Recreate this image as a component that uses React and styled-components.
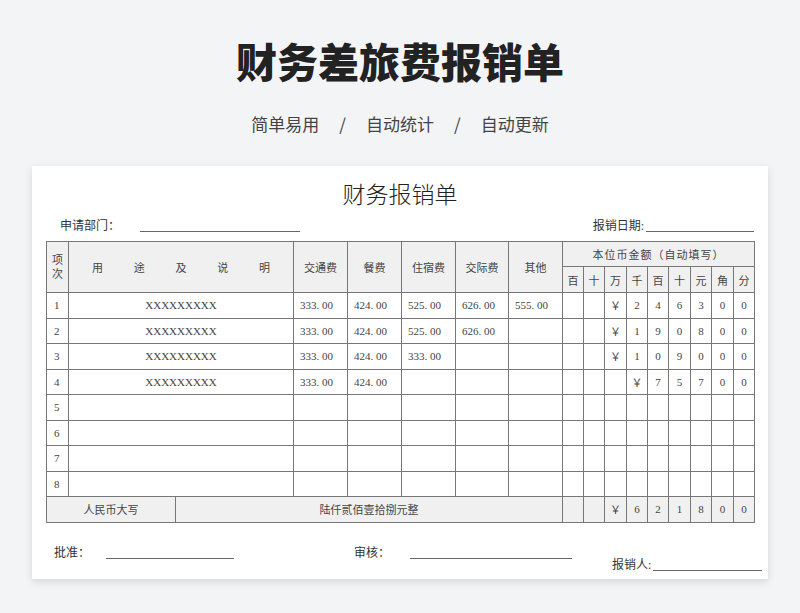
import React from "react";
import styled, { createGlobalStyle } from "styled-components";

const Global = createGlobalStyle`
  html, body { margin: 0; padding: 0; background: #f3f4f6; }
  body { font-family: "Noto Sans CJK SC", "Noto Sans", sans-serif; }
`;

const Page = styled.div`
  width: 800px; height: 613px; display: flex; flex-direction: column; align-items: center;
`;
const Title = styled.h1`
  margin: 34px 0 0; font-size: 41px; line-height: 52px; font-weight: 900; color: #222; letter-spacing: 0;
`;
const Sub = styled.div`
  margin-top: 26px; font-size: 17px; color: #444; display: flex; gap: 20px; line-height: 24px;
`;
const Card = styled.div`
  margin-top: 30px; width: 736px; height: 413px; background: #fff;
  box-shadow: 0 3px 8px rgba(0,0,0,0.12); box-sizing: border-box; padding: 14px 14px 0 14px;
  font-family: "Liberation Serif", "Noto Sans CJK SC", serif; color: #333;
  display: flex; flex-direction: column;
`;
const DocTitle = styled.div`
  text-align: center; font-size: 23px; line-height: 32px; color: #222; font-weight: 300;
`;
const MetaRow = styled.div`
  display: flex; justify-content: space-between; align-items: flex-end; height: 22px; padding: 0 0 0 14px; font-size: 12px; white-space: nowrap;
`;
const Field = styled.div`display: flex; align-items: flex-end;`;
const Line = styled.span`
  display: inline-block; width: ${p => p.w}px; border-bottom: 1px solid #666; margin-left: ${p => p.ml || 0}px; height: 1px; margin-bottom: 2px;
`;
const Table = styled.table`
  border-collapse: collapse; table-layout: fixed; width: 708px; margin-top: ${p => p.mt || 0}px; font-size: 11px; color: #444;
  td, th { border: 1px solid #777; padding: 0; text-align: center; font-weight: normal; overflow: hidden; white-space: nowrap; }
  th { background: #f0f0f0; }
`;
const R = styled.tr`height: ${p => p.h}px;`;
const Gray = styled.td`background: #f0f0f0;`;
const Sign = styled.div`
  display: flex; align-items: flex-end; margin-top: 20px; font-size: 12px; padding-left: 8px; white-space: nowrap;
`;
const SignItem = styled.div`display: flex; align-items: flex-end; margin-bottom: ${p => p.mb || 0}px; margin-left: ${p => p.ml || 0}px;`;

const digitCols = [21, 21, 22, 21, 21, 22, 21, 22, 21];
const units = ["百", "十", "万", "千", "百", "十", "元", "角", "分"];
const rows = [
  ["XXXXXXXXX", "333.00", "424.00", "525.00", "626.00", "555.00", ["", "", "￥", "2", "4", "6", "3", "0", "0"]],
  ["XXXXXXXXX", "333.00", "424.00", "525.00", "626.00", "", ["", "", "￥", "1", "9", "0", "8", "0", "0"]],
  ["XXXXXXXXX", "333.00", "424.00", "333.00", "", "", ["", "", "￥", "1", "0", "9", "0", "0", "0"]],
  ["XXXXXXXXX", "333.00", "424.00", "", "", "", ["", "", "", "￥", "7", "5", "7", "0", "0"]],
];
const num = { textAlign: "left" };

export default function App() {
  const all = [...rows, ...Array(4).fill(["", "", "", "", "", "", Array(9).fill("")])];
  return (
    <Page>
      <Global />
      <Title>财务差旅费报销单</Title>
      <Sub><span>简单易用</span><span>/</span><span>自动统计</span><span>/</span><span>自动更新</span></Sub>
      <Card>
        <DocTitle>财务报销单</DocTitle>
        <MetaRow>
          <Field>申请部门：<Line w={160} ml={20} /></Field>
          <Field>报销日期:<Line w={108} ml={2} /></Field>
        </MetaRow>
        <Table mt={7}>
          <colgroup>
            <col width={22} /><col width={225} /><col width={54} /><col width={54} /><col width={54} /><col width={53} /><col width={54} />
            {digitCols.map((w, i) => <col key={i} width={w} />)}
          </colgroup>
          <thead>
            <R h={25}>
              <th rowSpan={2} style={{ whiteSpace: "normal", lineHeight: "14px" }}>项<br />次</th>
              <th rowSpan={2} style={{ wordSpacing: "28px" }}>用 途 及 说 明</th>
              <th rowSpan={2}>交通费</th><th rowSpan={2}>餐费</th><th rowSpan={2}>住宿费</th><th rowSpan={2}>交际费</th><th rowSpan={2}>其他</th>
              <th colSpan={9} style={{ letterSpacing: "1px" }}>本位币金额（自动填写）</th>
            </R>
            <R h={26}>{units.map((u, i) => <th key={i}>{u}</th>)}</R>
          </thead>
          <tbody>
            {all.map((r, i) => (
              <R h={25.5} key={i}>
                <td style={{ textAlign: "left", paddingLeft: 7 }}>{i + 1}</td>
                <td>{r[0]}</td>
                {[1, 2, 3, 4, 5].map(k => <td key={k} style={{ ...num, paddingLeft: 6 }}>{r[k] && r[k].replace(".", ". ")}</td>)}
                {r[6].map((d, k) => <td key={k}>{d}</td>)}
              </R>
            ))}
          </tbody>
        </Table>
        <Table style={{ borderTop: "none" }}>
          <colgroup>
            <col width={129} /><col width={387} />
            {digitCols.map((w, i) => <col key={i} width={w} />)}
          </colgroup>
          <tbody>
            <R h={25}>
              <Gray style={{ borderTop: "none" }}>人民币大写</Gray>
              <Gray style={{ borderTop: "none" }}>陆仟贰佰壹拾捌元整</Gray>
              {["", "", "￥", "6", "2", "1", "8", "0", "0"].map((d, k) => <Gray key={k} style={{ borderTop: "none" }}>{d}</Gray>)}
            </R>
          </tbody>
        </Table>
        <Sign>
          <SignItem mb={12}>批准：<Line w={128} ml={16} /></SignItem>
          <SignItem mb={12} ml={120}>审核：<Line w={162} ml={20} /></SignItem>
          <SignItem ml={40}>报销人:<Line w={109} ml={2} /></SignItem>
        </Sign>
      </Card>
    </Page>
  );
}
